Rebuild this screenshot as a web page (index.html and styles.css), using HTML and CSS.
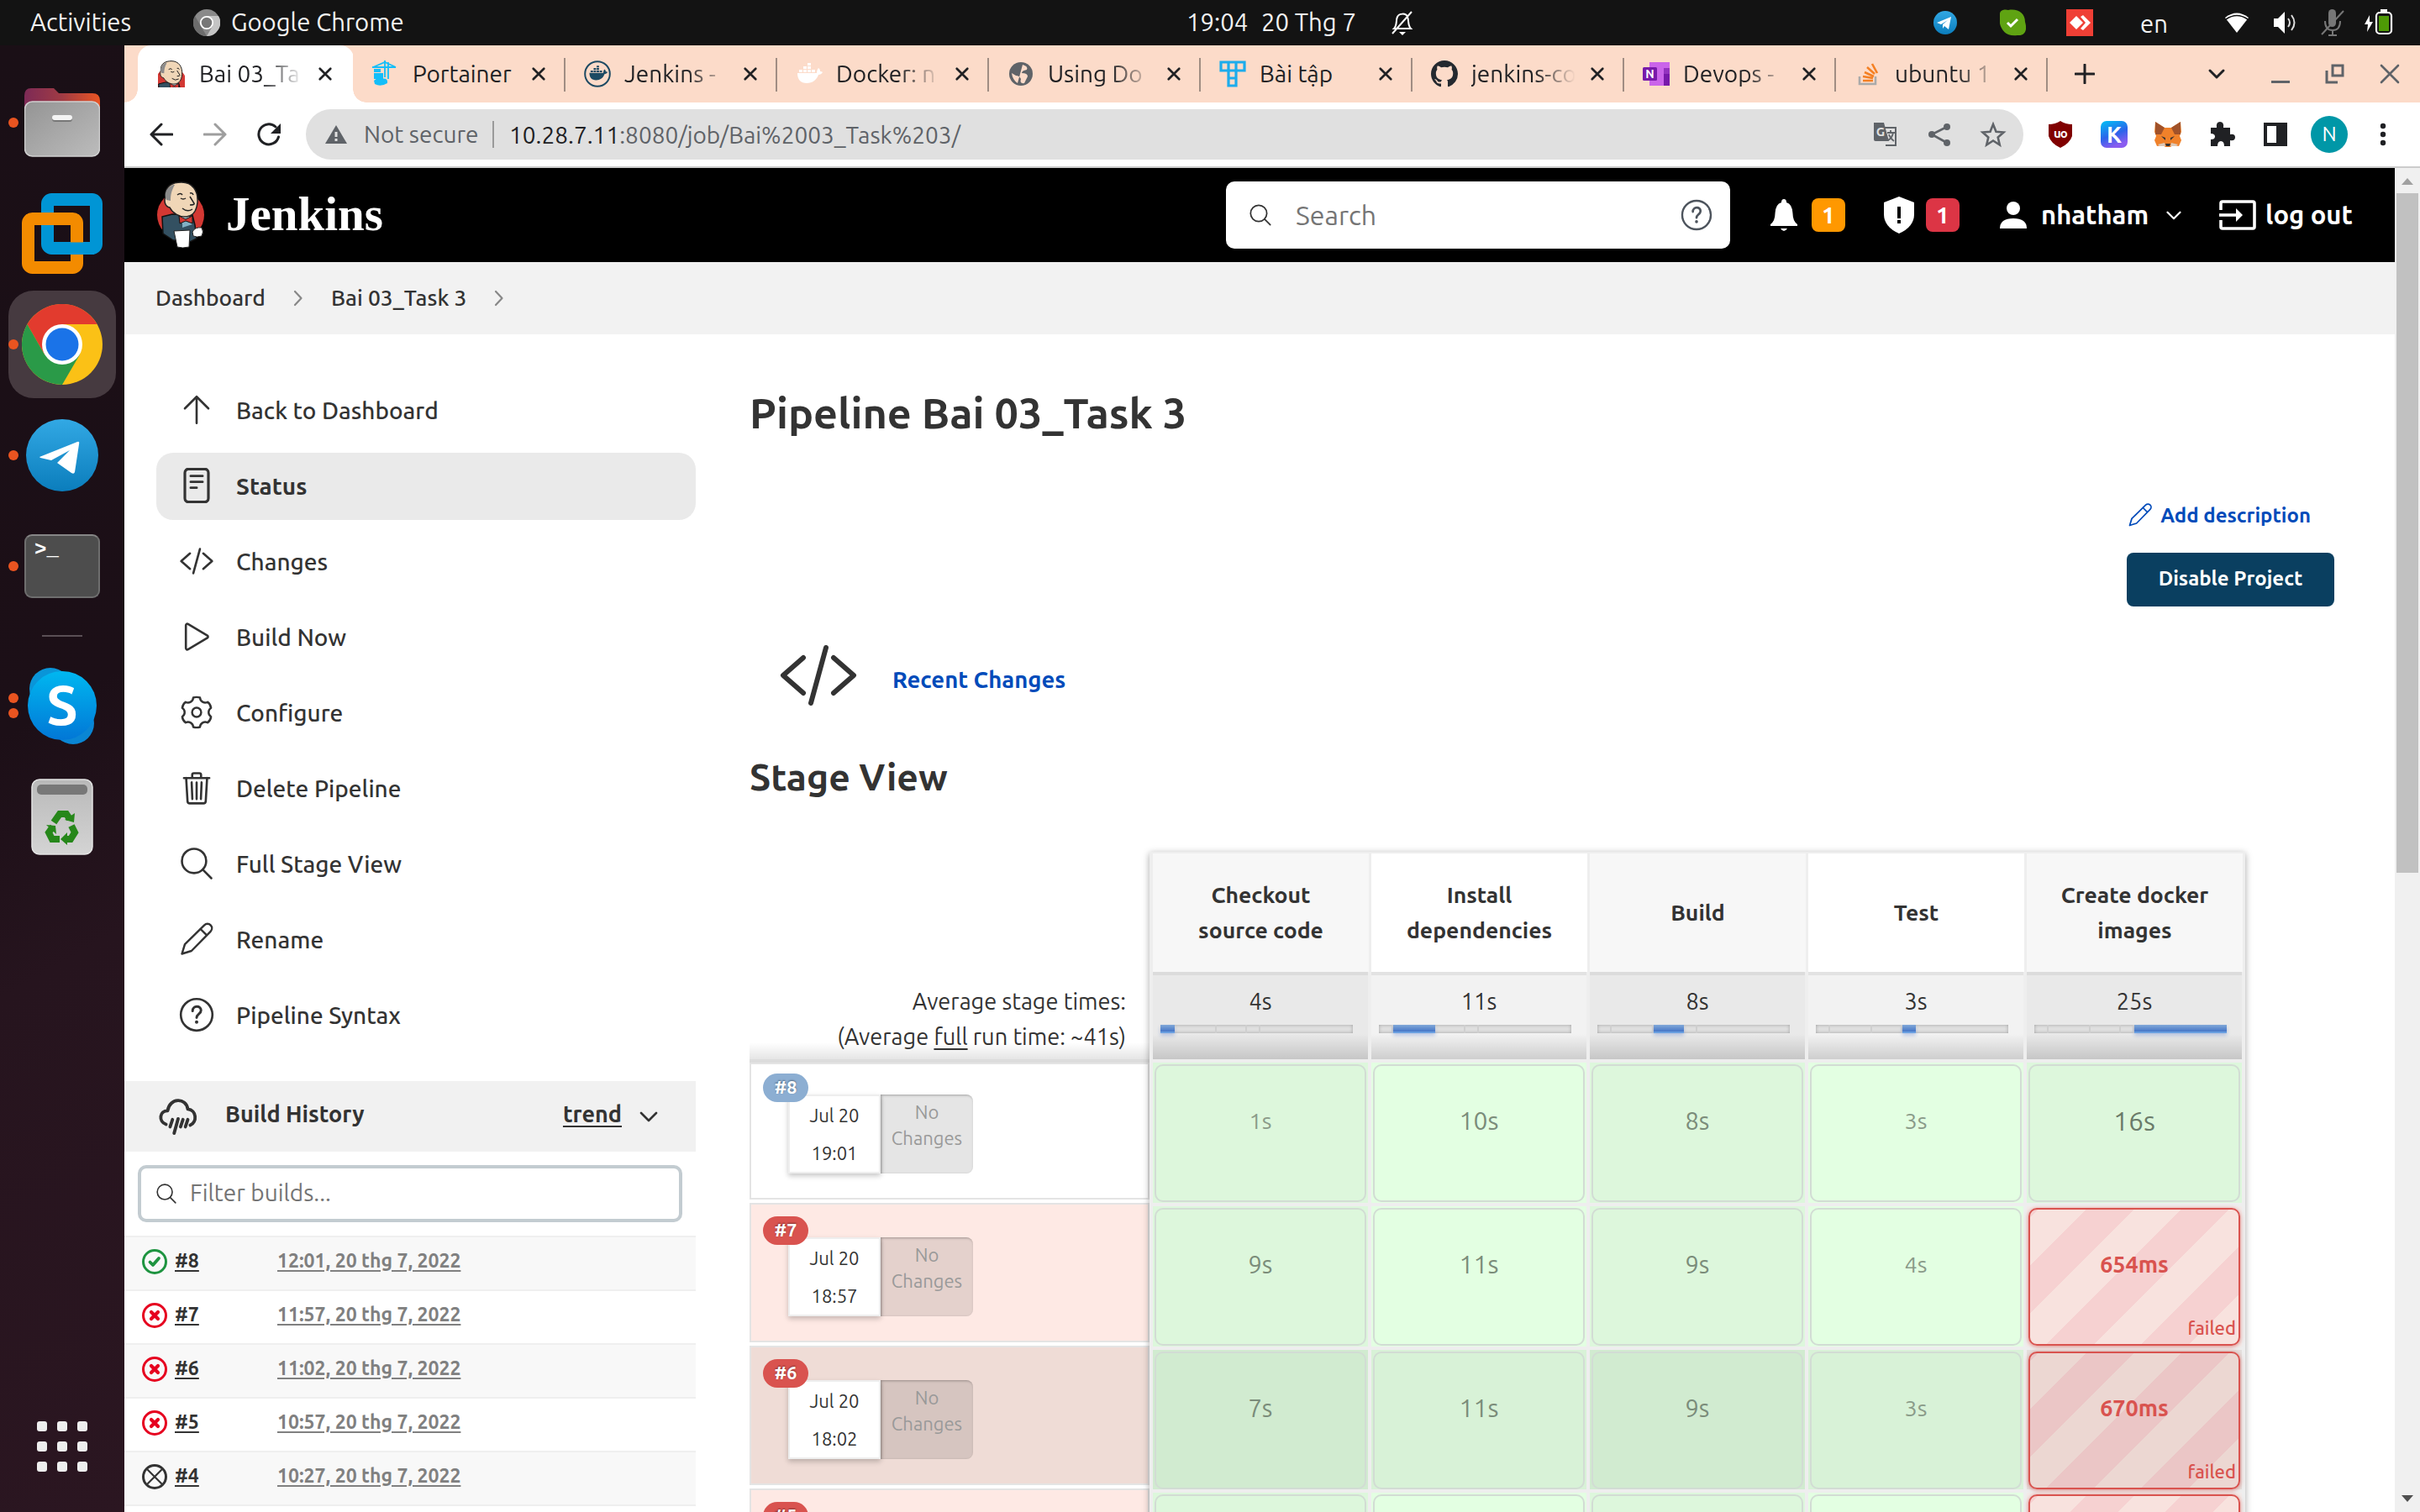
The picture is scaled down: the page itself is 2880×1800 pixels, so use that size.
FILE: index.html
```html
<!DOCTYPE html>
<html lang="vi">
<head>
<meta charset="utf-8">
<title>Bai 03_Task 3 [Jenkins]</title>
<link rel="stylesheet" href="styles.css">
</head>
<body>
<svg class="defs" width="0" height="0" aria-hidden="true">
  <defs>
    <symbol id="i-up" viewBox="0 0 48 48"><path class="ln" d="M24 42V7M8 22L24 6l16 16"/></symbol>
    <symbol id="i-status" viewBox="0 0 48 48"><rect class="ln" x="8" y="1.500" width="32" height="45" rx="5" stroke-width="3.600"/><path class="ln" stroke-width="3.400" d="M16 11h16M16 19h16M16 27h8"/></symbol>
    <symbol id="i-code" viewBox="0 0 512 512"><path class="ln" stroke-width="32" d="M160 368L32 256l128-112M352 368l128-112-128-112M304 80l-96 352"/></symbol>
    <symbol id="i-play" viewBox="0 0 512 512"><path class="ln" stroke-width="32" d="M100 91v330c0 17 17 28 31 20l281-168c12-7 12-27 0-34L131 71c-14-8-31 3-31 20z"/></symbol>
    <symbol id="i-gear" viewBox="0 0 48 48"><path class="ln" stroke-width="2.800" d="M19.4 4Q24 2.6 28.6 4C28.8 9.3 34.4 12.5 39 10Q43 13 43.6 18C39.2 20.8 39.2 27.2 43.6 30Q43 35 39 38C34.4 35.5 28.8 38.7 28.6 44Q24 45.4 19.4 44C19.2 38.7 13.6 35.5 9 38Q5 35 4.4 30C8.8 27.2 8.8 20.8 4.4 18Q5 13 9 10C13.6 12.5 19.2 9.3 19.4 4z"/><circle class="ln" stroke-width="2.800" cx="24" cy="24" r="6.200"/></symbol>
    <symbol id="i-trash" viewBox="0 0 512 512"><path class="ln" stroke-width="32" d="M104 112l20 338c1 18 14 30 32 30h200c18 0 31-12 32-30l20-338M72 112h368M192 112V66c0-14 10-24 24-24h80c14 0 24 10 24 24v46M256 176v240M184 176l10 240M328 176l-10 240"/></symbol>
    <symbol id="i-search" viewBox="0 0 48 48"><circle class="ln" cx="20.500" cy="20.500" r="16.500"/><path class="ln" d="M32.500 32.500L44 44"/></symbol>
    <symbol id="i-pencil" viewBox="0 0 48 48"><path class="ln" stroke-width="2.800" d="M4 44l4-13L34.500 5a5.800 5.800 0 0 1 8.500 8.500L17 40zM29 10l8.500 8.500"/></symbol>
    <symbol id="i-help" viewBox="0 0 48 48"><circle class="ln" cx="24" cy="24" r="21.500"/><path class="ln" stroke-width="3.400" d="M18.500 19c0-8 11.500-8 11.500-1 0 5-6 5-6 10"/><circle cx="24" cy="34" r="2.300" fill="currentColor"/></symbol>
    <symbol id="i-chev" viewBox="0 0 24 24"><path class="ln" stroke-width="2.600" d="M3 8l9 9 9-9"/></symbol>
    <symbol id="i-right" viewBox="0 0 12 20"><path class="ln" stroke-width="2.200" d="M2 2l7.500 8L2 18"/></symbol>
    <symbol id="i-x" viewBox="0 0 20 20"><path class="ln" stroke-width="3" d="M3 3l14 14M17 3L3 17"/></symbol>
    <symbol id="i-rain" viewBox="0 0 48 48"><path class="ln" stroke-width="4" d="M9 34C-1 30 1 17 11 17 13 1 34 0 36 15c11 1 12 16 3 20"/><path class="ln" stroke-width="4" d="M17 28l-3 9M24 27l-5 18M30 28l-3 9M36 28l-3 9"/></symbol>
    <symbol id="i-ok" viewBox="0 0 32 32"><circle class="ln" cx="16" cy="16" r="13.500"/><path class="ln" stroke-width="3.800" d="M10.500 16.500l3.500 3.500 7-8"/></symbol>
    <symbol id="i-fail" viewBox="0 0 32 32"><circle class="ln" cx="16" cy="16" r="13.500"/><path class="ln" stroke-width="4.200" d="M12 12l8 8M20 12l-8 8"/></symbol>
    <symbol id="i-abort" viewBox="0 0 32 32"><circle class="ln" cx="16" cy="16" r="13.500"/><path class="ln" stroke-width="2.200" d="M8 8l16 16M24 8L8 24"/></symbol>
    <symbol id="i-whale" viewBox="0 0 32 32"><path fill="currentColor" d="M2 15h23c0-3 1-5 2-6 2 1 2 3 2 4 1 0 2 0 3 1-1 2-3 3-5 3-2 6-7 10-14 10C6 27 2 23 2 15zM4 11h4v3H4zM9 11h4v3H9zM14 11h4v3h-4zM9 7h4v3H9zM14 7h4v3h-4zM14 3h4v3h-4zM19 11h4v3h-4z"/></symbol>
    <symbol id="i-jenkins" viewBox="0 0 58 80">
      <circle cx="29" cy="40" r="28" fill="#d33833"/>
      <path d="M7 42l12-3 24 1 3 12 2 16-8 4-20-2-12-8z" fill="#335061" stroke="#111" stroke-width="1.500"/>
      <path d="M27 39l5 14 9-13z" fill="#fff"/>
      <path d="M31 44l6-1 6 8-12 4z" fill="#81b0c4"/>
      <path d="M11 18C10 5 20 1 30 1c13 0 20 10 19 24-1 10-5 16-13 17-9 1-17-5-20-11-6-1-7-8-5-13z" fill="#f0d6b7" stroke="#222" stroke-width="1.500"/>
      <path d="M20 4C11 8 9 15 12 22l5 1c0-7 1-12 5-19z" fill="#8b8b8b"/>
      <path d="M25 16q4-3 6 0M40 14q3-1 4 2M29 20q3 2 6 0M40 18l5 8q1 2-5 2M31 32q6 5 12 1" fill="none" stroke="#222" stroke-width="1.500"/>
      <path d="M27 41l8 4 8-4v9l-8-3-7 3z" fill="#d33833" stroke="#111"/>
      <path d="M21 59l19-1-1 20q-8 2-14 0z" fill="#fff" stroke="#222"/>
      <path d="M43 60q3-6 11-5 3 5 0 10-6 2-10 0z" fill="#fff" stroke="#222"/>
    </symbol>
    <linearGradient id="g-tg" x2="0" y2="1"><stop offset="0" stop-color="#32a8e4"/><stop offset="1" stop-color="#0b7dbc"/></linearGradient>
    <linearGradient id="g-sk" x2="0" y2="1"><stop offset="0" stop-color="#00b7f0"/><stop offset="1" stop-color="#0277d6"/></linearGradient>
    <linearGradient id="g-fo" x2="1" y2="1"><stop offset="0" stop-color="#949494"/><stop offset="1" stop-color="#bcbcbc"/></linearGradient>
    <linearGradient id="g-fb" x2="1" y2="0"><stop offset="0" stop-color="#7d2a56"/><stop offset=".5" stop-color="#a03b44"/><stop offset="1" stop-color="#ea5523"/></linearGradient>
    <linearGradient id="g-tr" x2="0" y2="1"><stop offset="0" stop-color="#b9b9b9"/><stop offset="1" stop-color="#d4d4d4"/></linearGradient>
    <linearGradient id="g-k" x2=".4" y2="1"><stop offset="0" stop-color="#00c2f5"/><stop offset=".6" stop-color="#2b64ea"/><stop offset="1" stop-color="#8a5cf0"/></linearGradient>
  </defs>
</svg>

<header class="topbar">
  <span class="tb-act">Activities</span>
  <svg class="tb-chrome" viewBox="0 0 32 32"><circle cx="16" cy="16" r="16" fill="#8a8a8a"/><path d="M16 8h14a16 16 0 0 1-14 24l7-12z" fill="#c4c4c4"/><path d="M2 8l7 12 7 12A16 16 0 0 1 2 8z" fill="#6c6c6c"/><circle cx="16" cy="16" r="7.200" fill="#777" stroke="#fff" stroke-width="1.800"/></svg>
  <span class="tb-app">Google Chrome</span>
  <span class="tb-time">19:04</span>
  <span class="tb-date">20 Thg 7</span>
  <svg class="tb-bell" viewBox="0 0 28 30"><path d="M4 21c4-4 2-10 4-14s10-5 12 0 0 10 4 14zM25 1L2 27" fill="none" stroke="#fff" stroke-width="2"/><path d="M10 25h8l-4 4z" fill="#fff"/></svg>
  <div class="tray">
    <svg viewBox="0 0 28 28" width="28" height="28"><circle cx="14" cy="14" r="14" fill="url(#g-tg)"/><path d="M4 14l17-7-3 15-5-4-2 3v-5l6-5-8 5z" fill="#fff"/></svg>
    <svg class="t2" viewBox="0 0 32 32" width="32" height="32"><path d="M1 5C2 0 8 0 11 1c12-2 20 4 20 14 3 10 0 17-9 16C10 33 3 26 1 17z" fill="#5fa312"/><path d="M10 16l4 4 8-8" fill="none" stroke="#fff" stroke-width="3"/></svg>
    <svg class="t3" viewBox="0 0 32 32" width="32" height="32"><path fill="#ef3f35" d="M0 0h32v32H0z"/><path fill="#fff" d="M4 16l8-8 8 8-8 8zM17 9l3-2 9 9-9 9-3-2 6-7z"/></svg>
    <span class="t4">en</span>
    <svg class="t5" viewBox="0 0 32 26" width="32" height="26"><path d="M2 7Q16-4 30 7L16 25z" fill="#fff"/><path d="M3 9q13-9 26 0" fill="none" stroke="#131313" stroke-width="1.600"/></svg>
    <svg class="t6" viewBox="0 0 30 28" width="30" height="28"><path d="M0 9h5l8-8v26l-8-8H0z" fill="#fff"/><path d="M17 9q4 5 0 10M21 5q7 9 0 18" fill="none" stroke="#ddd" stroke-width="2"/></svg>
    <svg class="t7" viewBox="0 0 28 32" width="28" height="32"><rect x="9" y="0" width="9" height="21" rx="4.500" fill="#777"/><path d="M5 14q0 11 9 11t9-11M14 25v6M9 31h10M27 2L1 30" fill="none" stroke="#777" stroke-width="2"/></svg>
    <svg class="t8" viewBox="0 0 34 32" width="34" height="32"><path d="M6 7l-6 11h4l-1 9 7-12H6z" fill="#fff"/><rect x="14" y="4" width="18" height="25" rx="4" fill="none" stroke="#fff" stroke-width="2.200"/><path fill="#fff" d="M19 0h8v3h-8z"/><path fill="#4e9a06" d="M17 8h12v18H17z"/></svg>
  </div>
</header>

<div class="desk">
  <nav class="dock">
    <div class="dk dk-files"><i class="dot"></i>
      <svg width="90" height="84" viewBox="0 0 90 84"><path d="M0 10Q0 1 8 1h27l6 6h40q9 0 9 9v20H0z" fill="url(#g-fb)"/><rect x=".500" y="17" width="89" height="65" rx="9" fill="url(#g-fo)" stroke="#d0d0d0" stroke-width="1.500"/><rect x="33" y="34" width="24" height="7" rx="3.500" fill="#777"/><rect x="33" y="33" width="24" height="6" rx="3" fill="#f4f4f4"/></svg></div>
    <div class="dk dk-vm"><svg width="96" height="96" viewBox="0 0 96 96"><rect x="30.500" y="7.500" width="58" height="58" rx="5" fill="none" stroke="#0095d5" stroke-width="15"/><rect x="7.500" y="30.500" width="58" height="58" rx="5" fill="none" stroke="#f38b00" stroke-width="15"/><path d="M50 58.500h36v14.500H50z" fill="#0095d5"/></svg></div>
    <div class="dk dk-chrome"><i class="dot"></i><svg width="96" height="96" viewBox="0 0 96 96"><circle cx="48" cy="48" r="48" fill="#fbc116"/><path d="M6.400 24A48 48 0 0 1 89.600 24H48L27 60z" fill="#e23b2e"/><path d="M6.400 24A48 48 0 0 0 48 96L69 60H27z" fill="#2a9a48"/><circle cx="48" cy="48" r="24" fill="#fff"/><circle cx="48" cy="48" r="19.500" fill="#1a73e8"/></svg></div>
    <div class="dk dk-tg"><i class="dot"></i><svg width="86" height="86" viewBox="0 0 86 86"><circle cx="43" cy="43" r="43" fill="url(#g-tg)"/><path d="M16 45L61 27q3-1 2 3l-5 33q-1 3-4 1L37 52l15-15-22 12-13-3z" fill="#fff"/></svg></div>
    <div class="dk dk-term"><i class="dot"></i><div class="term">&gt;_</div></div>
    <hr class="dk-sep">
    <div class="dk dk-skype"><span class="dots"><i></i><i></i></span><svg width="84" height="92" viewBox="0 0 84 92"><circle cx="28" cy="26" r="25" fill="#0a95d8"/><circle cx="55" cy="67" r="25" fill="#0a86d4"/><circle cx="42" cy="46" r="41" fill="url(#g-sk)"/><text class="sk-s" x="42" y="69" text-anchor="middle">S</text></svg></div>
    <div class="dk dk-trash"><svg width="74" height="92" viewBox="0 0 74 92"><rect x="1" y="1" width="72" height="89" rx="9" fill="url(#g-tr)" stroke="#e4e4e4" stroke-width="1.500"/><rect x="7" y="7" width="60" height="12" rx="5" fill="#787878"/><g fill="none" stroke="#26871a" stroke-width="8"><path d="M27 52l7-10h8l4 6M48 56l4 8-5 8h-7M34 72h-9l-4-8 5-7"/></g><path fill="#26871a" d="M40 49l11 3 1-11zM43 64v15l-8-7zM18 55l11 1 1 10z"/></svg></div>
    <div class="apps"><i></i><i></i><i></i><i></i><i></i><i></i><i></i><i></i><i></i></div>
  </nav>

  <div class="win">
    <div class="tabs">
      <div class="tab active"><svg class="fav" viewBox="6 0 48 48"><use href="#i-jenkins" width="58" height="80"/></svg><span class="tt">Bai 03_Ta</span><svg class="cl"><use href="#i-x"/></svg></div>
      <div class="tab"><svg class="fav" viewBox="0 0 32 32"><path d="M1 8L15 2l13 6M0 8h28M15 0v20M19 2v20" fill="none" stroke="#13bef9" stroke-width="1.800"/><path d="M2 10h8v4H2zM2 15h11v7H2z" fill="#13bef9"/><path d="M2 24q4-4 8-2 9-2 8 5-8 5-15 1z" fill="#13bef9"/></svg><span class="tt">Portainer</span><svg class="cl"><use href="#i-x"/></svg></div>
      <div class="tab"><svg class="fav navy" viewBox="0 0 32 32"><circle cx="16" cy="16" r="14.800" fill="none" stroke="currentColor" stroke-width="2"/><use href="#i-whale" x="5" y="4" width="23" height="23"/></svg><span class="tt">Jenkins -</span><svg class="cl"><use href="#i-x"/></svg></div>
      <div class="tab"><svg class="fav white"><use href="#i-whale"/></svg><span class="tt">Docker: n</span><svg class="cl"><use href="#i-x"/></svg></div>
      <div class="tab"><svg class="fav" viewBox="0 0 32 32"><circle cx="16" cy="16" r="14" fill="#5f6368"/><path d="M18 5q7 2 5 6-6 1-6 4 7 0 7 4l-4 8q-6 1-4-5-2-4-6-4l-5-3q1 8 7 12" fill="#fcdbc9"/></svg><span class="tt">Using Do</span><svg class="cl"><use href="#i-x"/></svg></div>
      <div class="tab"><svg class="fav" viewBox="0 0 32 32"><path d="M2 2h28v10H2zM11 2v28h9V2M11 12h9M11 21h9" fill="none" stroke="#1cacec" stroke-width="3.200"/></svg><span class="tt">Bài tập</span><svg class="cl"><use href="#i-x"/></svg></div>
      <div class="tab"><svg class="fav" viewBox="0 0 16 16"><path fill="#24292f" d="M8 0C3.580 0 0 3.580 0 8c0 3.540 2.290 6.530 5.470 7.590.4.070.55-.17.55-.38 0-.19-.01-.82-.01-1.490-2.010.37-2.530-.49-2.690-.94-.09-.23-.48-.94-.82-1.130-.28-.15-.68-.52-.01-.53.63-.01 1.080.58 1.230.82.72 1.210 1.870.87 2.330.66.07-.52.28-.87.51-1.070-1.780-.2-3.640-.89-3.640-3.950 0-.87.31-1.590.82-2.150-.08-.2-.36-1.020.08-2.120 0 0 .67-.21 2.200.82.64-.18 1.320-.27 2-.27s1.360.09 2 .27c1.530-1.040 2.200-.82 2.200-.82.44 1.100.16 1.920.08 2.120.51.56.82 1.270.82 2.150 0 3.070-1.870 3.750-3.650 3.950.29.25.54.73.54 1.480 0 1.070-.01 1.930-.01 2.200 0 .21.15.46.55.38A8.010 8.010 0 0 0 16 8c0-4.420-3.580-8-8-8z"/></svg><span class="tt">jenkins-co</span><svg class="cl"><use href="#i-x"/></svg></div>
      <div class="tab"><svg class="fav" viewBox="0 0 32 32"><path fill="#ca64ea" d="M8 2h24v28H8z"/><path fill="#9332bf" d="M25 9h7v7h-7z"/><path fill="#7719aa" d="M25 16h7v14h-7z"/><rect y="8" width="17" height="16" rx="1.500" fill="#7719aa"/><text x="8.500" y="21" class="fav-n" text-anchor="middle">N</text></svg><span class="tt">Devops -</span><svg class="cl"><use href="#i-x"/></svg></div>
      <div class="tab"><svg class="fav" viewBox="0 0 32 32"><path d="M6 19v9h19v-9" fill="none" stroke="#aaa" stroke-width="2.600"/><path d="M10 24h12M10 19l12 2M12 14l11 5M15 8l9 8M21 4l6 11" fill="none" stroke="#f48024" stroke-width="2.600"/></svg><span class="tt">ubuntu 1</span><svg class="cl"><use href="#i-x"/></svg></div>
      <svg class="newtab" viewBox="0 0 24 24"><path class="ln" stroke-width="3" d="M12 1v22M1 12h22"/></svg>
      <div class="wctl">
        <svg width="24" height="24"><path class="ln dk1" stroke-width="3" d="M4 8l8 8 8-8"/></svg>
        <svg width="24" height="24"><path d="M1 20h22v3H1z" fill="#5f6368"/></svg>
        <svg width="24" height="24"><path class="sq" stroke-width="3" d="M9 2h12v12H9zM2 8v14h13"/></svg>
        <svg width="24" height="24"><path class="ln" stroke-width="2.600" d="M2 2l20 20M22 2L2 22"/></svg>
      </div>
    </div>

    <div class="toolbar">
      <svg class="nav" viewBox="0 0 28 28"><path class="ln" stroke-width="3" d="M14 2L2 14l12 12M2 14h25"/></svg>
      <svg class="nav fwd" viewBox="0 0 28 28"><path class="ln" stroke-width="3" d="M14 2l12 12-12 12M26 14H1"/></svg>
      <svg class="nav" viewBox="0 0 28 28"><path class="ln" stroke-width="3" d="M22 5A12 12 0 1 0 25.500 17"/><path d="M28 1v12H16z" fill="#202124"/></svg>
      <div class="omni">
        <svg class="warn" viewBox="0 0 26 22"><path d="M13 0l13 22H0z" fill="#5f6368"/><path d="M11.500 8h3v6h-3zM11.500 16h3v3h-3z" fill="#e0e0e0"/></svg>
        <span class="ns">Not secure</span>
        <span class="url"><b>10.28.7.11</b>:8080/job/Bai%2003_Task%203/</span>
        <div class="omni-i">
          <svg viewBox="0 0 32 32" width="32" height="32"><path d="M14 8h14v21H16" fill="none" stroke="#5f6368" stroke-width="2"/><path d="M2 2h12l6 22H4q-2 0-2-2z" fill="#5f6368"/><text class="tr-g" x="10" y="18" text-anchor="middle">G</text><path d="M18 14h9M22 11v3M25 14q-1 6-6 9M20 16q1 4 6 8" stroke="#5f6368" fill="none" stroke-width="1.800"/></svg>
          <svg viewBox="0 0 32 32" width="32" height="32"><path d="M25 7L7 16l18 10" fill="none" stroke="#5f6368" stroke-width="2.600"/><g fill="#5f6368"><circle cx="25" cy="7" r="4"/><circle cx="7" cy="16" r="4"/><circle cx="25" cy="26" r="4"/></g></svg>
          <svg viewBox="0 0 32 32" width="32" height="32"><path d="M16 4l3.500 8.700 9 .8-6.800 6 2.100 9L16 23.500 8.200 28.500l2.100-9-6.800-6 9-.8z" fill="none" stroke="#5f6368" stroke-width="2.600"/></svg>
        </div>
      </div>
      <div class="ext">
        <svg viewBox="0 0 32 32"><path d="M16 0q6 4 14 4v14Q27 27 16 32 5 27 2 18V4q8 0 14-4z" fill="#800000"/><text class="ub" x="16" y="20" text-anchor="middle">uo</text></svg>
        <svg viewBox="0 0 32 32"><rect width="32" height="32" rx="7" fill="url(#g-k)"/><text class="kk" x="16" y="26" text-anchor="middle">K</text></svg>
        <svg viewBox="0 0 32 32"><path d="M1 1l11 7h8l11-7 1 12-2 5 2 5-3 7-7-1-3 2h-6l-3-2-7 1-3-7 2-5-2-5z" fill="#f0812a"/><path d="M1 1l11 7-4 8H1zM31 1L20 8l4 8h7z" fill="#a0522a"/><path d="M8 18l5 2v3zM24 18l-5 2v3zM13 27h6l-1 3h-4z" fill="#333"/><path d="M4 28l8-2 1 4-6 0zM28 28l-8-2-1 4 6 0z" fill="#dcc8b8"/></svg>
        <svg viewBox="0 0 32 32"><path fill="#202124" d="M3 8h7q-1-7 4-7t4 7h8v8q6-1 6 3.500T26 23v7h-7q0-6-4-6t-4 6H3v-8q5 0 5-3.500T3 15z"/></svg>
        <svg viewBox="0 0 32 32"><path d="M2 2h28v28H2zM6 6v20h11V6z" fill="#202124" fill-rule="evenodd"/></svg>
        <span class="av">N</span>
        <svg viewBox="0 0 32 32"><g fill="#202124"><circle cx="16" cy="6" r="3.200"/><circle cx="16" cy="16" r="3.200"/><circle cx="16" cy="26" r="3.200"/></g></svg>
      </div>
    </div>

    <div class="view">
      <div class="page">
        <header class="jh">
          <svg class="jlogo"><use href="#i-jenkins"/></svg>
          <span class="jname">Jenkins</span>
          <div class="jsearch"><svg width="28" height="28" class="thin"><use href="#i-search"/></svg><span>Search</span><svg class="jhelp" width="38" height="38"><use href="#i-help"/></svg></div>
          <svg class="jbell" viewBox="0 0 32 40"><path fill="#fff" d="M16 0q3 0 3 4 7 2 7.500 13 0 9 5.500 13v2H0v-2q5.500-4 5.500-13Q6 6 13 4q0-4 3-4zM12 35h8q-4 6-8 0z"/></svg>
          <span class="bdg or">1</span>
          <svg class="jsh" viewBox="0 0 38 46"><path fill="#fff" d="M19 1l18 7v14q0 15-18 23Q1 37 1 22V8z"/><path fill="#000" d="M17 13h4v14h-4zM17 29h4v4h-4z"/></svg>
          <span class="bdg rd">1</span>
          <svg class="jusr" viewBox="0 0 32 32"><circle cx="16" cy="8" r="8" fill="#fff"/><path fill="#fff" d="M0 32q0-12 16-12t16 12z"/></svg>
          <span class="juser">nhatham</span>
          <svg class="jchev"><use href="#i-chev"/></svg>
          <svg class="jout" viewBox="0 0 44 36"><path d="M2 12V4q0-2 2-2h36q2 0 2 2v28q0 2-2 2H4q-2 0-2-2v-8" fill="none" stroke="#fff" stroke-width="3.600"/><path d="M0 18h22" stroke="#fff" stroke-width="3.600"/><path d="M20 10l8 8-8 8z" fill="#fff"/></svg>
          <span class="jlo">log out</span>
        </header>
        <div class="crumbs"><span class="c1">Dashboard</span><svg><use href="#i-right"/></svg><span class="c2">Bai 03_Task 3</span><svg><use href="#i-right"/></svg></div>

        <div class="body">
          <aside class="side">
            <ul class="tasks">
              <li><svg class="ic"><use href="#i-up"/></svg>Back to Dashboard</li>
              <li class="on"><svg class="ic"><use href="#i-status"/></svg>Status</li>
              <li><svg class="ic"><use href="#i-code"/></svg>Changes</li>
              <li><svg class="ic"><use href="#i-play"/></svg>Build Now</li>
              <li><svg class="ic"><use href="#i-gear"/></svg>Configure</li>
              <li><svg class="ic"><use href="#i-trash"/></svg>Delete Pipeline</li>
              <li><svg class="ic"><use href="#i-search"/></svg>Full Stage View</li>
              <li><svg class="ic"><use href="#i-pencil"/></svg>Rename</li>
              <li><svg class="ic"><use href="#i-help"/></svg>Pipeline Syntax</li>
            </ul>
            <div class="bh"><svg class="bh-i"><use href="#i-rain"/></svg><span class="bh-t">Build History</span><a>trend</a><svg class="bh-c"><use href="#i-chev"/></svg></div>
            <div class="filter"><svg class="thin"><use href="#i-search"/></svg><span>Filter builds...</span></div>
            <ul class="builds">
              <li><svg class="g"><use href="#i-ok"/></svg><a class="n"><u>#8</u></a><a class="d"><u>12:01, 20 thg 7, 2022</u></a></li>
              <li><svg class="r"><use href="#i-fail"/></svg><a class="n"><u>#7</u></a><a class="d"><u>11:57, 20 thg 7, 2022</u></a></li>
              <li><svg class="r"><use href="#i-fail"/></svg><a class="n"><u>#6</u></a><a class="d"><u>11:02, 20 thg 7, 2022</u></a></li>
              <li><svg class="r"><use href="#i-fail"/></svg><a class="n"><u>#5</u></a><a class="d"><u>10:57, 20 thg 7, 2022</u></a></li>
              <li><svg><use href="#i-abort"/></svg><a class="n"><u>#4</u></a><a class="d"><u>10:27, 20 thg 7, 2022</u></a></li>
              <li></li>
            </ul>
          </aside>

          <main class="main">
            <h1>Pipeline Bai 03_Task 3</h1>
            <div class="desc"><svg><use href="#i-pencil"/></svg><span>Add description</span></div>
            <div class="dis"><button>Disable Project</button></div>
            <div class="recent"><svg><use href="#i-code"/></svg><a>Recent Changes</a></div>
            <h2>Stage View</h2>

            <div class="stage">
              <div class="jobs">
                <div class="avg"><div>Average stage times:</div><div>(Average <u>full</u> run time: ~41s)</div></div>
                <div class="job first"><span class="no blue">#8</span><div class="box"><div class="when"><span>Jul 20</span><span>19:01</span></div><div class="chg">No<br>Changes</div></div></div>
                <div class="job bad"><span class="no">#7</span><div class="box"><div class="when"><span>Jul 20</span><span>18:57</span></div><div class="chg">No<br>Changes</div></div></div>
                <div class="job bad hov"><span class="no">#6</span><div class="box"><div class="when"><span>Jul 20</span><span>18:02</span></div><div class="chg">No<br>Changes</div></div></div>
                <div class="job bad"><span class="no">#5</span></div>
              </div>
              <div class="grid">
                <div class="th">Checkout<br>source code</div><div class="th">Install<br>dependencies</div><div class="th">Build</div><div class="th">Test</div><div class="th">Create docker<br>images</div>
                <div class="av1"><span>4s</span><div class="bar"><i class="s1 b"></i><i class="s2"></i><i class="s3"></i><i class="s4"></i><i class="s5"></i></div></div>
                <div class="av1"><span>11s</span><div class="bar"><i class="s1"></i><i class="s2 b"></i><i class="s3"></i><i class="s4"></i><i class="s5"></i></div></div>
                <div class="av1"><span>8s</span><div class="bar"><i class="s1"></i><i class="s2"></i><i class="s3 b"></i><i class="s4"></i><i class="s5"></i></div></div>
                <div class="av1"><span>3s</span><div class="bar"><i class="s1"></i><i class="s2"></i><i class="s3"></i><i class="s4 b"></i><i class="s5"></i></div></div>
                <div class="av1"><span>25s</span><div class="bar"><i class="s1"></i><i class="s2"></i><i class="s3"></i><i class="s4"></i><i class="s5 b"></i></div></div>

                <div class="td"><div class="t-s">1s</div></div><div class="td"><div class="t-l">10s</div></div><div class="td"><div class="t-m">8s</div></div><div class="td"><div class="t-s">3s</div></div><div class="td"><div class="t-x">16s</div></div>
                <div class="td"><div class="t-m">9s</div></div><div class="td"><div class="t-l">11s</div></div><div class="td"><div class="t-m">9s</div></div><div class="td"><div class="t-s">4s</div></div><div class="td ko"><div>654ms<em>failed</em></div></div>
                <div class="td h"><div class="t-m">7s</div></div><div class="td h"><div class="t-l">11s</div></div><div class="td h"><div class="t-m">9s</div></div><div class="td h"><div class="t-s">3s</div></div><div class="td ko h"><div>670ms<em>failed</em></div></div>
                <div class="td"><div></div></div><div class="td"><div></div></div><div class="td"><div></div></div><div class="td"><div></div></div><div class="td ko"><div></div></div>
              </div>
            </div>
          </main>
        </div>
      </div>
      <div class="scroll"><i class="up"></i><b></b><i class="dn"></i></div>
    </div>
  </div>
</div>
</body>
</html>
```
FILE: styles.css
```css
* { box-sizing: border-box; }
html, body { margin: 0; height: 1800px; overflow: hidden; }
body {
  width: 2880px; display: flex; flex-direction: column;
  font-family: Ubuntu, "Noto Sans", "Open Sans", sans-serif;
  font-size: 28px; color: #333; background: #fff; white-space: nowrap;
}
ul { list-style: none; margin: 0; padding: 0; }
svg { flex: none; display: block; }
.defs { position: absolute; }
.ln { fill: none; stroke: currentColor; stroke-linecap: round; stroke-linejoin: round; }
.sq { fill: none; stroke: currentColor; }
symbol .ln:not([stroke-width]) { stroke-width: 3; }

/* GNOME top bar */
.topbar { height: 54px; flex: none; background: #131313; color: #f2f2f2; display: flex; align-items: center; padding-left: 36px; font-size: 29.33px; }
.topbar span { flex: none; margin-top: -1px; }
.tb-act { width: 194px; }
.tb-chrome { width: 32px; height: 32px; margin-right: 13px; }
.tb-app { width: 1137px; }
.tb-time { width: 89px; }
.tb-date { width: 154px; }
.tb-bell { width: 28px; height: 30px; margin-top: 2px; }
.tray { display: flex; align-items: center; margin-left: 618px; }
.t2 { margin-left: 50px; } .t3 { margin-left: 48px; } .tray .t4 { margin-left: 56px; margin-top: 2px; width: 99px; }
.t6 { margin-left: 28px; } .t7 { margin-left: 26px; } .t8 { margin-left: 24px; }

.desk { flex: 1; display: flex; min-height: 0; }

/* Dock */
.dock { width: 148px; flex: none; background: linear-gradient(150deg, #1a0f16 0%, #1c0f17 45%, #26141e 62%, #2b1621 100%); display: flex; flex-direction: column; align-items: center; }
.dk { position: relative; width: 128px; display: flex; justify-content: center; align-items: center; flex: none; }
.dot, .dots i { width: 12px; height: 12px; border-radius: 50%; background: #e95420; }
.dot { position: absolute; left: 0; top: calc(50% - 6px); }
.dots { position: absolute; left: 0; top: 31px; display: grid; gap: 6px; }
.dk-files { height: 84px; margin-top: 50px; }
.dk-vm { height: 96px; margin-top: 42px; }
.dk-chrome { height: 128px; margin-top: 20px; border-radius: 30px; background: #463a40; }
.dk-tg { height: 86px; margin-top: 25px; }
.dk-term { height: 76px; margin-top: 51px; }
.term { width: 90px; height: 76px; border-radius: 9px; background: #4d4d4d; border: 2px solid #6e6e6e; border-top-color: #868686; color: #fff; font: bold 24px/30px "Liberation Mono", monospace; padding: 2px 10px; }
.dk-sep { width: 48px; height: 2px; border: 0; background: #5a4f55; margin: 44px 0 36px; }
.dk-skype { height: 92px; }
.sk-s { font: bold 66px Ubuntu, "Noto Sans", sans-serif; fill: #fff; }
.dk-trash { height: 92px; margin-top: 41px; }
.apps { display: grid; grid-template-columns: repeat(3, 12px); gap: 12px; margin-top: 673px; }
.apps i { height: 12px; border-radius: 3px; background: #eee; }

/* Browser chrome */
.win { flex: 1; display: flex; flex-direction: column; min-width: 0; }
.tabs { height: 68px; flex: none; background: #fcdbc9; display: flex; align-items: center; padding-left: 16px; color: #202124; }
.tab { width: 252px; height: 68px; flex: none; display: flex; align-items: center; padding-left: 22px; position: relative; }
.tab:not(.active)::after { content: ""; position: absolute; right: 0; top: 15px; width: 2px; height: 40px; background: #a08d83; }
.tab.active { width: 257px; padding-left: 24px; border-radius: 16px 16px 0 0; background: linear-gradient(#fff, #fff) 0 0 / 256px 68px no-repeat; }
.tab.active::before { content: ""; position: absolute; left: -16px; right: -15px; top: 0; bottom: 0;
  background: radial-gradient(circle at 0 0, transparent 15.5px, #fff 16px) 0 100% / 16px 16px no-repeat, radial-gradient(circle at 100% 0, transparent 15.5px, #fff 16px) 100% 100% / 16px 16px no-repeat; }
.fav { width: 32px; height: 32px; margin-right: 16px; position: relative; }
.navy { color: #1d4a63; } .white { color: #fff; }
.fav-n { font: bold 14px Ubuntu, "Noto Sans", sans-serif; fill: #fff; }
.tt { width: 124px; flex: none; overflow: hidden; line-height: 40px; mask-image: linear-gradient(90deg, #000 75px, transparent 124px); }
.tab:nth-child(2) .tt, .tab:nth-child(6) .tt { mask-image: none; }
.tab.active .tt { margin-left: 1px; width: 127px; }
.cl { width: 18px; height: 18px; margin-left: 17px; position: relative; }
.tab.active .cl { margin-left: 14px; }
.newtab { width: 24px; height: 24px; margin-left: 32px; }
.wctl { display: flex; gap: 41px; margin-left: auto; margin-right: 24px; color: #5f6368; }
.wctl svg:first-child { margin-right: 11px; }
.dk1 { stroke: #202124; }
.toolbar { height: 78px; flex: none; background: #fff; border-bottom: 2px solid #ccc; display: flex; align-items: center; padding-left: 30px; color: #202124; }
.nav { width: 28px; height: 28px; margin-right: 36px; }
.nav.fwd { color: #9e9e9e; }
.omni { width: 2044px; height: 60px; flex: none; margin-left: -6px; border-radius: 30px; background: #e0e0e0; display: flex; align-items: center; padding-left: 23px; color: #5f6368; }
.warn { width: 26px; height: 22px; margin-right: 20px; }
.ns { width: 155px; height: 32px; line-height: 32px; border-right: 2px solid #9a9a9a; margin-right: 18px; flex: none; }
.url b { font-weight: 400; color: #202124; }
.omni-i { margin-left: auto; display: flex; gap: 32px; margin-right: 20px; }
.tr-g { font: bold 15px Ubuntu, "Noto Sans", sans-serif; fill: #e0e0e0; }
.ext { display: flex; align-items: center; gap: 32px; margin-left: 28px; }
.ext svg { width: 32px; height: 32px; }
.ub { font: bold 15px Ubuntu, "Noto Sans", sans-serif; fill: #fff; letter-spacing: -1px; }
.kk { font: bold 27px Ubuntu, "Noto Sans", sans-serif; fill: #fff; }
.av { width: 44px; height: 44px; margin: 0 -6px; border-radius: 50%; background: #0097a7; color: #fff; font-size: 24px; line-height: 44px; text-align: center; }

.view { flex: 1; display: flex; min-height: 0; }
.page { width: 2702px; flex: none; overflow: hidden; background: #fff; }
.scroll { flex: 1; background: #f0f0f0; display: flex; flex-direction: column; align-items: center; padding-top: 12px; }
.scroll i { border: 7px solid transparent; height: 0; }
.scroll .up { border-top: 0; border-bottom: 8px solid #a0a0a0; }
.scroll .dn { border-bottom: 0; border-top: 8px solid #505050; margin-top: auto; margin-bottom: 12px; }
.scroll b { width: 26px; height: 809px; background: #c1c1c1; margin-top: 10px; }

/* Jenkins header */
.jh { height: 112px; background: #000; color: #fff; display: flex; align-items: center; padding-left: 38px; font-weight: 700; }
.jh > * { flex: none; }
.jlogo { width: 58px; height: 80px; margin-right: 25px; }
.jname { font: bold 57px/1 "Liberation Serif", serif; width: 1190px; margin-top: -4px; }
.jsearch { width: 600px; height: 80px; border-radius: 10px; background: #fff; color: #333; display: flex; align-items: center; padding: 0 21px 0 27px; font-weight: 400; }
.jsearch span { color: #757575; margin-left: 28px; font-size: 32px; margin-top: -1px; }
.jhelp { margin-left: auto; color: #4d545d; }
.thin .ln { stroke-width: 4; }
.jbell { width: 32px; height: 40px; margin: 2px 17px 0 48px; }
.bdg { width: 40px; height: 40px; border-radius: 8px; text-align: center; line-height: 39px; }
.or { background: #ff9800; } .rd { background: #dc3545; }
.jsh { width: 38px; height: 46px; margin: 0 13px 0 45px; }
.jusr { width: 32px; height: 32px; margin: 0 17px 0 48px; }
.juser { width: 148px; font-size: 31px; margin-top: -2px; }
.jchev { width: 20px; height: 20px; margin-right: 44px; }
.jout { width: 44px; height: 36px; margin-right: 11px; }
.jlo { font-size: 31px; margin-top: -2px; }

.crumbs { height: 86px; background: #f2f2f2; display: flex; align-items: center; padding-left: 37px; font-size: 26.4px; font-weight: 500; }
.crumbs svg { width: 12px; height: 20px; color: #888; }
.crumbs span { margin-top: -3px; }
.c1 { width: 164px; } .crumbs .c2 { width: 194px; margin-left: 33px; }

.body { display: flex; }
.side { width: 680px; flex: none; }
.tasks { padding: 51px 0 38px 38px; display: grid; gap: 10px; }
.tasks li { height: 80px; width: 642px; border-radius: 20px; display: flex; align-items: center; padding: 0 0 2px 27px; font-weight: 500; }
.tasks li.on { background: #eaeaea; font-weight: 700; }
.ic { width: 42px; height: 42px; margin-right: 26px; }
.bh { height: 84px; background: #f1f1f1; display: flex; align-items: center; padding: 0 44px 0 40px; font-weight: 700; font-size: 27px; }
.bh-i { width: 48px; height: 46px; margin-right: 32px; }
.bh span, .bh a { margin-top: -6px; }
.bh a { margin-left: auto; text-decoration: underline; text-underline-offset: 4px; }
.bh-c { width: 24px; height: 24px; margin-left: 20px; }
.filter { height: 68px; margin: 16px; border: 4px solid #c3ccd1; border-radius: 10px; display: flex; align-items: center; padding-left: 17px; gap: 15px; color: #757575; }
.filter span { margin-top: -3px; }
.filter svg { width: 26px; height: 26px; color: #333; }
.builds li { height: 64px; border-top: 2px solid #efefef; display: flex; align-items: center; padding: 0 0 8px 20px; font-size: 23px; font-weight: 700; }
.builds li:nth-child(odd) { background: #f8f8f8; }
.builds svg { width: 32px; height: 32px; margin-right: 8px; margin-top: 4px; }
.g { color: #1e9440; } .r { color: #e6001f; }
.builds u { text-underline-offset: 3px; }
.n { width: 122px; flex: none; }
.d { color: #808080; }

.main { flex: 1; padding: 59px 72px 0 64px; }
h1, h2 { margin: 0; font-weight: 700; }
h1 { font-size: 50.4px; line-height: 70px; }
h2 { font-size: 44.5px; line-height: 60px; }
.desc { display: flex; justify-content: flex-end; align-items: center; height: 40px; margin-top: 66px; padding-right: 28px; color: #004bba; font-weight: 700; font-size: 24px; gap: 9px; }
.desc svg { width: 30px; height: 30px; }
.dis { display: flex; justify-content: flex-end; margin-top: 25px; }
button { width: 247px; height: 64px; border: 0; border-radius: 8px; background: #0a3f60; color: #fff; font: 700 24px Ubuntu, "Noto Sans", sans-serif; padding: 0 0 3px; }
.recent { height: 96px; margin: 34px 0 43px; padding-left: 34px; display: flex; align-items: center; }
.recent svg { width: 96px; height: 96px; }
.recent a { color: #004bba; font-weight: 700; margin-left: 40px; padding-top: 8px; font-size: 27.5px; }

/* Stage table */
.stage { display: flex; margin-top: 59px; height: 786px; }
.jobs { width: 476px; flex: none; }
.avg { height: 251px; padding: 157px 28px 0 0; text-align: right; font-size: 27.2px; line-height: 42px; border-bottom: 4px solid #dcdcdc; background: linear-gradient(transparent, rgba(0,0,0,.1)) 0 100% / 100% 20px no-repeat; }
.avg div { position: relative; z-index: 1; }
.avg u { text-underline-offset: 4px; }
.job { height: 166px; margin-bottom: 4px; border: 2px solid #e4e4e4; padding: 14px 0 0 14px; }
.job.first { height: 163px; padding-top: 11px; }
.job.bad { background: #fee9e4; } .job.hov { background: #efdcd6; }
.no { position: relative; z-index: 1; display: block; width: 54px; height: 34px; border-radius: 17px; background: #d9534f; color: #fff; font-weight: 700; font-size: 21.5px; line-height: 33px; text-align: center; text-shadow: 0 -1px 2px rgba(0,0,0,.4); }
.blue { background: #8caed2; }
.box { display: flex; margin: -9px 0 0 30px; height: 94px; font-size: 22px; }
.when { width: 110px; background: #fff; border: 2px solid #eee; box-shadow: 0 3px 6px rgba(0,0,0,.22); display: flex; flex-direction: column; line-height: 45px; text-align: center; }
.chg { width: 110px; background: rgba(0,0,0,.1); border-radius: 0 8px 8px 0; box-shadow: inset 1px 1px 3px rgba(0,0,0,.3); color: #999; text-align: center; line-height: 31px; padding-top: 5px; }
.grid { width: 1304px; flex: none; padding: 0 2px; display: grid; grid-template-columns: repeat(5, 260px); grid-template-rows: 143px 108px 171px 171px 170px 171px; height: 934px; background: #eee; box-shadow: 0 2px 8px rgba(0,0,0,.35); }
.th { display: flex; align-items: center; justify-content: center; text-align: center; font-weight: 700; font-size: 26.6px; line-height: 42px; background: #fff; margin: 2px 1px 0 2px; padding-bottom: 2px; }
.th:nth-child(odd) { background: #f7f7f7; }
.av1 { height: 104px; margin: 0 2px; border-top: 4px solid #e2e2e2; background: linear-gradient(transparent 70%, rgba(0,0,0,.15)) #f2f2f2; text-align: center; font-size: 27.2px; padding-top: 10px; }
.av1:nth-child(even) { background-color: #e9e9e9; border-color: #dcdcdc; }
.av1 span { display: block; line-height: 42px; }
.bar { width: 229px; height: 10px; margin: 7px 0 0 9px; display: flex; background: #e0e0e0; box-shadow: inset 0 0 4px rgba(0,0,0,.28); }
.bar i { border-right: 2px solid #cfcfcf; }
.bar .s5 { border: 0; }
.s1 { width: 17px; } .s2 { width: 50px; } .s3 { width: 36px; } .s4 { width: 16px; } .s5 { width: 110px; }
.bar .b { border: 0; background: linear-gradient(#82a9d8, #4878c8 75%, #6a9fe0 85%); box-shadow: 0 3px 4px rgba(70,110,200,.3); }
.td { margin: 0 2px 4px; padding: 2px; background: #e3ffe2; }
.td > div { height: 164px; width: 252px; border: 2px solid #d2dcd4; border-radius: 10px; text-align: center; line-height: 130px; position: relative; }
.td:nth-child(5n+1), .td:nth-child(5n+3), .td:nth-child(5n) { background: #ddf7dc; }
.td.h { background: #d8f2d7; }
.td.h:nth-child(5n+1), .td.h:nth-child(5n+3) { background: #d1ebd0; }
.td.ko:nth-child(5n) { background: #f2ecea; }
.td.ko.h:nth-child(5n) { background: #e4e0de; }
.td.ko > div { border-color: #d9534f; color: #d9534f; font-weight: 700; font-size: 27px; background: repeating-linear-gradient(135deg, #f6d1d1 0 7px, #f8e2de 7px 47px, #f6d1d1 47px 80px); box-shadow: 0 1px 5px rgba(217,83,79,.7); }
.td.ko.h > div { background: repeating-linear-gradient(135deg, #ebc6c6 0 7px, #ecd7d2 7px 47px, #ebc6c6 47px 80px); }
.td em { position: absolute; right: 3px; bottom: 4px; line-height: 30px; font-style: normal; font-weight: 500; font-size: 22px; }
.td .t-s { font-size: 27px; color: #8a9b89; } .td .t-m { font-size: 29px; color: #7b8c7a; } .td .t-l { font-size: 30px; color: #7b8c7a; } .td .t-x { font-size: 32px; color: #6b7b6a; }
```
